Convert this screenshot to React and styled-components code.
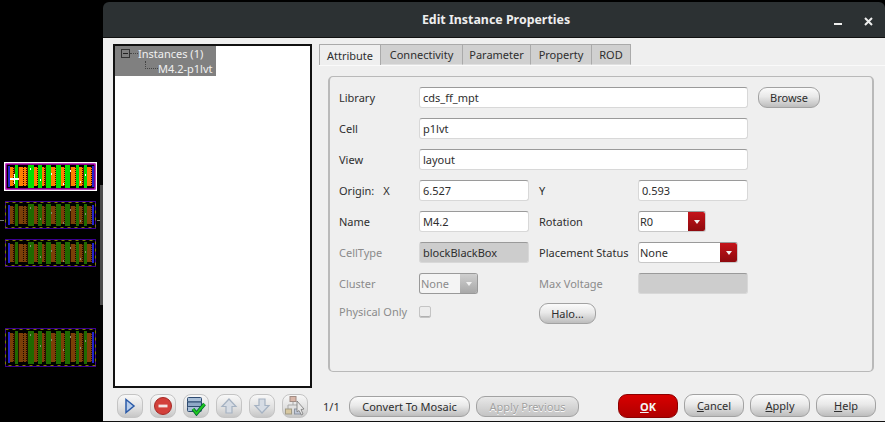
import React from 'react'
import styled, { createGlobalStyle, css } from 'styled-components'

const GlobalStyle = createGlobalStyle`
  html, body { margin: 0; padding: 0; background: #000; overflow: hidden; }
  * { box-sizing: border-box; }
`

// [x, width] of the metal and poly columns, in px from the cell's left edge
const metal = [[6, 4], [15, 5], [20, 3], [30, 4], [38, 3], [47, 5], [57, 4], [67, 5], [75, 4], [83, 5]]
const poly = [[11, 3], [24, 6], [34, 4], [42, 5], [52, 5], [61, 5], [72, 3], [80, 3]]
const contacts = [[26, 6], [36, 17], [47, 11], [59, 21], [66, 8], [76, 19], [81, 12]]

function LayoutCell({ height, selected }) {
  const orange = selected ? '#ff7f00' : '#7c3f08'
  const green = selected ? '#00e000' : '#1f6a00'
  const dots = selected ? '#ffffff' : '#8a8a70'
  const base = selected ? '#5a1c00' : '#2a1000'
  const w = 93
  const inset = selected ? 0 : 1
  return (
    <CellSvg width={w} height={height} viewBox={`0 0 ${w} ${height}`}>
      <rect width={w} height={height} fill="#000" />
      {selected && <rect x="0.75" y="0.75" width={w - 1.5} height={height - 1.5} fill="none" stroke="#fff" strokeWidth="1.5" />}
      {selected && <rect x="2" y="2" width={w - 4} height={height - 4} fill="none" stroke="#ff00ff" />}
      {!selected && <rect x={inset + 0.5} y="0.5" width={w - 3} height={height - 1} fill="none" stroke="#3c0090" />}
      {!selected && <rect x={inset + 0.5} y="1.5" width={w - 3} height={height - 3} fill="none" stroke="#7a7a00" strokeDasharray="3 4" />}
      <rect x="6" y="5" width="82" height={height - 10} fill={base} />
      <rect x="4" y="4" width="2" height={height - 8} fill="#2222cc" />
      <rect x="88" y="4" width="2" height={height - 8} fill="#2222cc" />
      {metal.map(([x, mw]) => (
        <rect key={x} x={x} y="5" width={mw} height={height - 10} fill={orange} />
      ))}
      {poly.map(([x, pw]) => (
        <rect key={x} x={x} y="3" width={pw} height={height - 6} fill={green} />
      ))}
      {metal.map(([x, mw]) => (
        <line key={x} x1={x + mw - 0.5} y1="5" x2={x + mw - 0.5} y2={height - 5} stroke={selected ? '#400000' : '#1a0800'} strokeDasharray="1 1" />
      ))}
      {contacts.map(([x, y]) => (
        <rect key={x} x={x} y={y} width="1" height="2" fill={dots} />
      ))}
      {selected && <rect x="6" y="16" width="9" height="2" fill="#fff" />}
      {selected && <rect x="10" y="12" width="1" height="10" fill="#fff" />}
    </CellSvg>
  )
}

function PlayIcon() {
  return (
    <svg width="12" height="16" viewBox="0 0 12 16">
      <path d="M2 1.5 L10 8 L2 14.5 Z" fill="#b8cdea" stroke="#2a5aa8" strokeWidth="1.5" />
    </svg>
  )
}

function StopIcon() {
  return (
    <svg width="20" height="20" viewBox="0 0 20 20">
      <circle cx="10" cy="10" r="8.5" fill="#d3403a" stroke="#a52a26" />
      <rect x="5.5" y="8.6" width="9" height="2.8" fill="#f4e4e2" />
    </svg>
  )
}

function SaveIcon() {
  return (
    <svg width="20" height="20" viewBox="0 0 20 20">
      <rect x="1.5" y="1.5" width="14" height="4.5" rx="1" fill="#a9bfd8" stroke="#2d4a70" />
      <rect x="1.5" y="6" width="14" height="4.5" fill="#8ea8c6" stroke="#2d4a70" />
      <rect x="1.5" y="10.5" width="14" height="5" rx="1" fill="#a9bfd8" stroke="#2d4a70" />
      <path d="M7 13 L10.5 17.5 L18.5 8" fill="none" stroke="#063" strokeWidth="3.6" />
      <path d="M7 13 L10.5 17.5 L18.5 8" fill="none" stroke="#1fc81f" strokeWidth="2" />
    </svg>
  )
}

function ArrowIcon({ down }) {
  return (
    <svg width="18" height="18" viewBox="0 0 18 18" style={down ? { transform: 'scaleY(-1)' } : undefined}>
      <path d="M9 2 L16 9.5 H12 V16 H6 V9.5 H2 Z" fill="#d6dce4" stroke="#a5b2c2" strokeWidth="1.2" />
    </svg>
  )
}

function HierarchyIcon() {
  return (
    <svg width="22" height="22" viewBox="0 0 22 22">
      <path d="M9 6 V10 M4 14 V10 H14 V14" fill="none" stroke="#a9a9a9" />
      <rect x="6" y="1.5" width="6" height="5" fill="#d8b6a8" stroke="#a08c84" />
      <rect x="1.5" y="14" width="6" height="5" fill="#d8c8a0" stroke="#a09a84" />
      <rect x="10.5" y="14" width="6" height="5" fill="#c0c8d8" stroke="#8c94a0" />
      <path d="M13 6 L20 14 L17 14.5 L19 19 L17.5 20 L15 15.5 L13 17 Z" fill="#e8e8e8" stroke="#777" strokeWidth="0.8" />
    </svg>
  )
}

export default function App() {
  return (
    <>
      <GlobalStyle />
      <Screen>
        <Canvas>
          <GuideLine />
          <CellStack>
            <LayoutCell height={29} selected />
            <LayoutCell height={28} />
            <LayoutCell height={28} />
            <LastCell>
              <LayoutCell height={39} />
            </LastCell>
          </CellStack>
          <CanvasScroll />
        </Canvas>
        <Dialog>
          <TitleBar>
            Edit Instance Properties
            <WindowButtons>
              <svg width="9" height="9" viewBox="0 0 9 9">
                <rect x="0" y="6" width="8" height="2" fill="#eee" />
              </svg>
              <svg width="9" height="9" viewBox="0 0 9 9">
                <path d="M1 1 L8 8 M8 1 L1 8" stroke="#eee" strokeWidth="2" />
              </svg>
            </WindowButtons>
          </TitleBar>
          <Body>
            <Main>
              <TreePanel>
                <TreeSelection>
                  <TreeRow>
                    <TreeToggle />
                    <TreeDash />
                    Instances (1)
                  </TreeRow>
                  <TreeChild>
                    <TreeElbow />
                    M4.2-p1lvt
                  </TreeChild>
                </TreeSelection>
              </TreePanel>
              <TabArea>
                <TabBar>
                  <Tab $active $w={62}>Attribute</Tab>
                  <Tab $w={82}>Connectivity</Tab>
                  <Tab $w={68}>Parameter</Tab>
                  <Tab $w={61}>Property</Tab>
                  <Tab $w={39}>ROD</Tab>
                </TabBar>
                <TabPage>
                  <FormGroup>
                    <Form>
                      <Label>Library</Label>
                      <Input $wide value="cds_ff_mpt" />
                      <Button>Browse</Button>

                      <Label>Cell</Label>
                      <Input $wide value="p1lvt" />
                      <span />

                      <Label>View</Label>
                      <Input $wide value="layout" />
                      <span />

                      <OriginLabel>
                        <span>Origin:</span>
                        <span>X</span>
                      </OriginLabel>
                      <Input value="6.527" />
                      <Label>Y</Label>
                      <Input value="0.593" />
                      <span />

                      <Label>Name</Label>
                      <Input value="M4.2" />
                      <Label>Rotation</Label>
                      <Select $w={68} value="R0" />
                      <span />

                      <Label $off>CellType</Label>
                      <Input $off value="blockBlackBox" />
                      <Label>Placement Status</Label>
                      <Select $w={100} value="None" />
                      <span />

                      <Label $off>Cluster</Label>
                      <Select $w={59} value="None" $off />
                      <Label $off>Max Voltage</Label>
                      <Input $off value="" />
                      <span />

                      <Label $off>Physical Only</Label>
                      <CheckBox />
                      <HaloCell>
                        <Button $w={57}>Halo...</Button>
                      </HaloCell>
                    </Form>
                  </FormGroup>
                </TabPage>
              </TabArea>
            </Main>
            <Footer>
              <ToolGroup>
                <ToolButton><PlayIcon /></ToolButton>
                <ToolButton><StopIcon /></ToolButton>
                <ToolButton><SaveIcon /></ToolButton>
                <ToolButton><ArrowIcon /></ToolButton>
                <ToolButton><ArrowIcon down /></ToolButton>
                <ToolButton><HierarchyIcon /></ToolButton>
              </ToolGroup>
              <PageCount>1/1</PageCount>
              <MosaicButtons>
                <Button $w={121}>Convert To Mosaic</Button>
                <Button $w={103} $off>Apply Previous</Button>
              </MosaicButtons>
              <DialogActions>
                <OkButton><u>O</u>K</OkButton>
                <ActionButton><u>C</u>ancel</ActionButton>
                <ActionButton><u>A</u>pply</ActionButton>
                <ActionButton><u>H</u>elp</ActionButton>
              </DialogActions>
            </Footer>
          </Body>
        </Dialog>
      </Screen>
    </>
  )
}

const Screen = styled.div`
  display: flex;
  width: 885px;
  height: 422px;
  background: #000;
  font-family: "Noto Sans", sans-serif;
  font-size: 11px;
  color: #2e2e2e;
  overflow: hidden;
`

const Canvas = styled.div`
  position: relative;
  width: 103px;
  flex: none;
  padding: 162px 0 0 4px;
`

const CellStack = styled.div`
  position: relative;
  display: flex;
  flex-direction: column;
  gap: 10px;
`

const LastCell = styled.div`
  margin-top: 51px;
`

const CellSvg = styled.svg`
  display: block;
`

const CanvasScroll = styled.div`
  position: absolute;
  right: 0;
  top: 185px;
  width: 3px;
  height: 120px;
  background: #4a4a4a;
`

const GuideLine = styled.div`
  position: absolute;
  left: 0;
  right: 0;
  top: 220px;
  height: 1px;
  background: #777;
`

const Dialog = styled.div`
  flex: 1;
  display: flex;
  flex-direction: column;
  margin-top: 2px;
  border-top-left-radius: 6px;
  border-top-right-radius: 6px;
  overflow: hidden;
`

const TitleBar = styled.div`
  position: relative;
  flex: none;
  height: 36px;
  padding: 0 0 0 4px;
  background: #2c3133;
  border-bottom: 1px solid #111;
  color: #eee;
  font-weight: bold;
  font-size: 12.4px;
  display: flex;
  align-items: center;
  justify-content: center;
`

const WindowButtons = styled.div`
  position: absolute;
  right: 12px;
  top: 15px;
  display: flex;
  gap: 21px;
  align-items: center;
`

const Body = styled.div`
  flex: 1;
  min-height: 0;
  display: flex;
  flex-direction: column;
  background: #efefef;
  border-bottom: 1px solid #111;
`

const Main = styled.div`
  flex: none;
  height: 350px;
  display: flex;
  padding: 6px 0 0 10px;
`

const TreePanel = styled.div`
  width: 199px;
  height: 344px;
  background: #fff;
  border: 2px solid #111;
`

const TreeSelection = styled.div`
  width: 101px;
  background: #808080;
  color: #f0f0f0;
`

const TreeRow = styled.div`
  height: 15px;
  display: flex;
  align-items: center;
  padding-left: 6px;
  white-space: nowrap;
`

const TreeToggle = styled.span`
  position: relative;
  flex: none;
  width: 9px;
  height: 9px;
  border: 1px solid #333;
  &::after {
    content: '';
    position: absolute;
    left: 1px;
    right: 1px;
    top: 3px;
    height: 1px;
    background: #222;
  }
`

const TreeDash = styled.span`
  flex: none;
  width: 8px;
  border-bottom: 1px dotted #444;
`

const TreeChild = styled(TreeRow)`
  padding-left: 30px;
`

const TreeElbow = styled.span`
  flex: none;
  width: 13px;
  height: 8px;
  margin-top: -8px;
  border-left: 1px dotted #444;
  border-bottom: 1px dotted #444;
`

const TabArea = styled.div`
  flex: 1;
  margin-left: 7px;
  display: flex;
  flex-direction: column;
`

const TabBar = styled.div`
  display: flex;
  height: 21px;
  flex: none;
`

const Tab = styled.div`
  width: ${(p) => p.$w}px;
  display: flex;
  align-items: center;
  justify-content: center;
  border: 1px solid #aaa;
  border-left-width: ${(p) => (p.$active ? '1px' : '0')};
  border-bottom: ${(p) => (p.$active ? 'none' : '1px solid #e0e0e0')};
  background: ${(p) => (p.$active ? '#efefef' : '#d0d0d0')};
`

const TabPage = styled.div`
  flex: 1;
  border-top: 1px solid #fafafa;
  padding: 10px 10px 0 9px;
`

const FormGroup = styled.div`
  width: 546px;
  height: 296px;
  border: 1px solid #b9b9b9;
  border-right-width: 2px;
  border-left-width: 2px;
  border-radius: 5px;
`

const Form = styled.div`
  display: grid;
  grid-template-columns: 70px 110px 89px 110px 62px;
  grid-template-rows: repeat(7, 31px) 25px;
  column-gap: 10px;
  padding: 5px 0 0 9px;
  align-items: center;
`

const Label = styled.span`
  color: ${(p) => (p.$off ? '#8b8b8b' : '#2e2e2e')};
  white-space: nowrap;
`

const OriginLabel = styled(Label)`
  display: flex;
  gap: 9px;
`

const InputBox = styled.div`
  height: 21px;
  padding-left: 3px;
  display: flex;
  align-items: center;
  border-radius: 3px;
  border: 1px solid #d8d8d8;
  border-top: 1px solid #9a9a9a;
  background: ${(p) => (p.$off ? '#cdcdcd' : '#fff')};
  ${(p) => p.$wide && 'grid-column: span 3;'}
`

function Input({ value, $wide, $off }) {
  return <InputBox $wide={$wide} $off={$off}>{value}</InputBox>
}

const SelectBox = styled.div`
  width: ${(p) => p.$w}px;
  height: 21px;
  display: flex;
  align-items: stretch;
  border-radius: 3px;
  border: 1px solid ${(p) => (p.$off ? '#999' : '#c8c8c8')};
  border-top-color: #9a9a9a;
  background: ${(p) => (p.$off ? '#f4f4f4' : '#fff')};
  color: ${(p) => (p.$off ? '#8b8b8b' : '#2e2e2e')};
  overflow: hidden;
`

const SelectValue = styled.span`
  flex: 1;
  display: flex;
  align-items: center;
  padding-left: 1px;
`

const SelectArrow = styled.span`
  width: 17px;
  display: flex;
  align-items: center;
  justify-content: center;
  background: ${(p) =>
    p.$off ? 'linear-gradient(#cfcfcf, #a8a8a8)' : 'linear-gradient(#c4141a, #8e0a0e)'};
  &::after {
    content: '';
    border-left: 3px solid transparent;
    border-right: 3px solid transparent;
    border-top: 4px solid #f2f2f2;
  }
`

function Select({ value, $w, $off }) {
  return (
    <SelectBox $w={$w} $off={$off}>
      <SelectValue>{value}</SelectValue>
      <SelectArrow $off={$off} />
    </SelectBox>
  )
}

const CheckBox = styled.span`
  width: 12px;
  height: 12px;
  border: 1px solid #c4c4c4;
  border-radius: 2px;
  background: #ececec;
  box-shadow: inset 0 -1px 0 #b0b0b0;
`

const HaloCell = styled.div`
  grid-column: span 2;
  padding-top: 4px;
`

const pill = css`
  display: flex;
  align-items: center;
  justify-content: center;
  flex: none;
  white-space: nowrap;
  border-radius: 9px;
  border: 1px solid #a2a2a2;
  background: linear-gradient(#fbfbfb, #e9e9e9 45%, #bdbdbd);
`

const Button = styled.div`
  ${pill}
  width: ${(p) => (p.$w ? `${p.$w}px` : '62px')};
  height: 21px;
  color: ${(p) => (p.$off ? '#a0a0a0' : '#2e2e2e')};
  ${(p) => p.$off && 'text-shadow: 0 1px 0 #fff; background: linear-gradient(#e8e8e8, #c4c4c4);'}
`

const Footer = styled.div`
  flex: 1;
  display: flex;
  align-items: center;
  padding-left: 14px;
  padding-top: 3px;
`

const ToolGroup = styled.div`
  display: flex;
  gap: 7px;
`

const ToolButton = styled.div`
  ${pill}
  width: 26px;
  height: 24px;
  border-radius: 8px;
  border-color: #c4c4c4;
  background: linear-gradient(#f8f8f8, #dfdfdf 60%, #c6c6c6);
`

const PageCount = styled.span`
  width: 26px;
  margin-left: 15px;
`

const MosaicButtons = styled.div`
  display: flex;
  gap: 6px;
`

const DialogActions = styled.div`
  display: flex;
  gap: 6px;
  margin-left: 39px;
`

const ActionButton = styled.div`
  ${pill}
  width: 60px;
  height: 23px;
`

const OkButton = styled(ActionButton)`
  height: 24px;
  border-color: #8c0000;
  background: linear-gradient(#d80000, #b00000);
  color: #f4f4f4;
  font-weight: bold;
`
